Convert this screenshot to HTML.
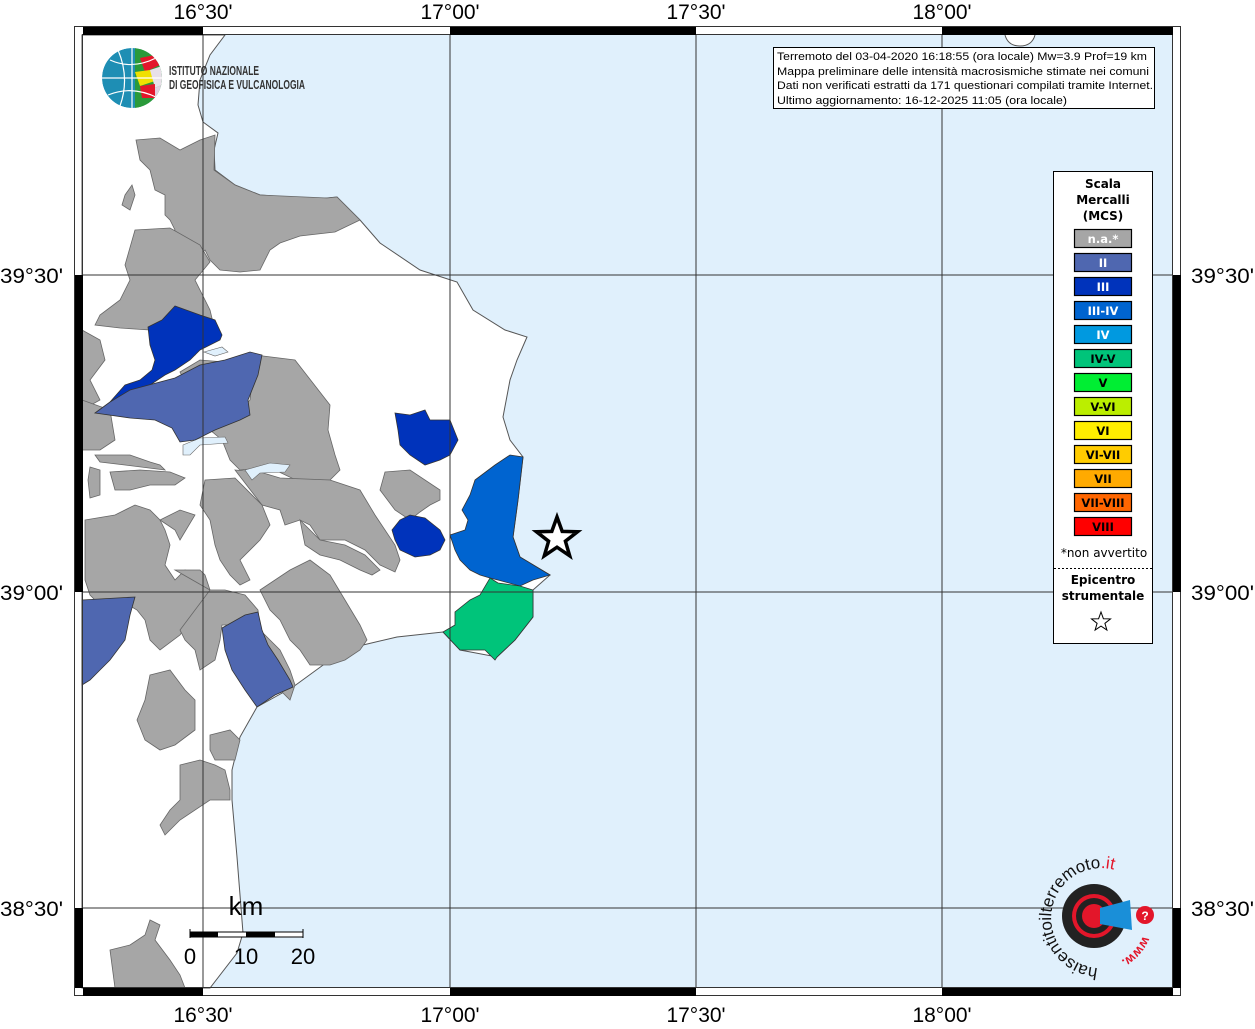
<!DOCTYPE html>
<html><head><meta charset="utf-8">
<style>
html,body{margin:0;padding:0;background:#fff;}
body{width:1255px;height:1024px;overflow:hidden;font-family:"Liberation Sans",sans-serif;}
</style></head><body>
<svg width="1255" height="1024" viewBox="0 0 1255 1024" xmlns="http://www.w3.org/2000/svg" font-family="Liberation Sans, sans-serif">
<rect x="82" y="35" width="1091" height="953" fill="#e0f0fc"/>
<path d="M82,35 L225,35 L210,55 L200,80 L198,105 L203,122 L218,133 L214,150 L215,170 L235,185 L260,195 L300,198 L327,198 L337,197 L360,220 L380,243 L420,270 L457,282 L473,310 L505,330 L527,337 L517,360 L510,380 L503,417 L510,440 L523,457 L518,500 L513,537 L520,557 L550,575 L533,590 L533,617 L515,640 L497,657 L460,650 L443,632 L397,637 L363,645 L330,660 L293,687 L257,707 L240,737 L232,770 L232,800 L237,857 L243,933 L237,953 L210,988 L82,988 Z" fill="#fff" stroke="#555" stroke-width="1"/>
<path d="M1005,35 Q1008,46 1020,46 Q1032,46 1035,35" fill="#fff" stroke="#555"/>
<g fill="#a6a6a6" stroke="#666" stroke-width="0.8">
<path d="M136,140 L160,138 L180,150 L200,140 L215,135 L214,170 L235,185 L260,195 L327,198 L337,197 L360,220 L335,232 L300,236 L280,243 L270,250 L260,270 L240,272 L220,270 L210,260 L205,250 L200,255 L195,270 L170,275 L165,270 L162,260 L160,240 L175,230 L170,220 L165,215 L165,195 L155,190 L150,170 L140,160 Z"/>
<path d="M125,195 L132,185 L135,195 L130,210 L122,205 Z"/>
<path d="M135,230 L170,228 L200,245 L210,262 L195,280 L210,310 L216,335 L200,345 L195,355 L160,345 L150,330 L120,328 L95,325 L100,315 L120,300 L130,280 L125,265 Z"/>
<path d="M82,330 L100,340 L105,360 L90,380 L100,400 L82,410 Z"/>
<path d="M82,400 L110,410 L115,440 L100,450 L82,450 Z"/>
<path d="M255,355 L295,360 L330,405 L328,430 L335,455 L340,470 L330,480 L300,482 L275,470 L260,468 L240,470 L230,460 L222,440 L210,430 L230,420 L250,400 Z"/>
<path d="M180,372 L200,360 L260,365 L245,390 L230,400 L200,410 Z"/>
<path d="M235,470 L260,472 L280,478 L330,480 L360,490 L375,515 L395,545 L400,560 L395,572 L380,565 L365,550 L345,540 L320,540 L310,525 L300,520 L285,525 L280,510 L262,505 Z"/>
<path d="M205,480 L235,478 L262,505 L270,525 L260,540 L240,560 L250,580 L240,585 L230,575 L220,560 L215,545 L210,520 L200,505 Z"/>
<path d="M385,472 L410,470 L440,490 L440,500 L430,505 L420,512 L410,520 L395,510 L380,490 Z"/>
<path d="M95,455 L130,455 L150,462 L160,465 L165,470 L125,465 L100,462 Z"/>
<path d="M110,472 L140,470 L170,472 L185,478 L175,485 L150,485 L130,490 L115,490 Z"/>
<path d="M90,467 L100,470 L100,495 L90,498 L88,480 Z"/>
<path d="M85,520 L115,515 L135,505 L150,510 L160,520 L165,530 L170,545 L165,565 L175,580 L185,570 L200,575 L210,590 L225,600 L205,610 L190,620 L180,635 L160,650 L150,640 L145,620 L137,610 L120,600 L100,605 L90,595 L85,580 Z"/>
<path d="M160,520 L180,510 L195,515 L180,540 L175,530 Z"/>
<path d="M175,570 L200,570 L205,575 L210,590 Z"/>
<path d="M210,590 L225,590 L245,595 L258,610 L260,630 L270,640 L280,650 L290,670 L295,685 L290,700 L280,690 L265,680 L260,670 L250,650 L240,635 L232,625 L222,625 L220,640 L215,660 L200,670 L195,650 L185,640 L180,630 Z"/>
<path d="M260,590 L290,570 L310,560 L330,575 L345,600 L360,625 L367,640 L360,650 L345,660 L330,665 L310,665 L300,650 L290,640 L280,620 L270,610 Z"/>
<path d="M300,520 L320,540 L345,545 L365,555 L380,570 L372,575 L360,570 L340,560 L320,555 L305,545 Z"/>
<path d="M150,675 L170,670 L185,690 L195,700 L195,730 L175,745 L160,750 L145,740 L137,720 L145,700 Z"/>
<path d="M210,735 L230,730 L240,740 L235,760 L215,760 L210,750 Z"/>
<path d="M180,765 L200,760 L215,765 L225,770 L230,790 L230,800 L210,800 L180,820 L165,835 L160,825 L170,810 L180,800 Z"/>
<path d="M110,950 L130,945 L145,935 L150,920 L160,925 L155,940 L170,960 L180,975 L185,988 L115,988 Z"/>
</g>
<g fill="#e0f0fc" stroke="#666" stroke-width="0.6">
<path d="M204,352 L222,347 L228,352 L215,356 Z"/>
<path d="M183,445 L200,438 L225,437 L228,443 L200,445 L190,455 L183,455 Z"/>
<path d="M245,470 L270,463 L290,465 L285,472 L260,473 L252,480 Z"/>
</g>
<g stroke="#333" stroke-width="0.8">
<path d="M148,327 L162,320 L175,306 L200,315 L215,320 L222,335 L220,340 L200,350 L190,360 L175,370 L165,375 L150,385 L135,390 L120,398 L110,402 L125,385 L140,380 L152,370 L155,360 L150,345 Z" fill="#0033bb"/>
<path d="M95,413 L110,402 L130,390 L175,378 L200,365 L225,360 L250,352 L262,355 L258,375 L248,400 L250,415 L240,420 L215,430 L195,440 L180,442 L172,428 L155,420 L130,418 Z" fill="#4f67b0"/>
<path d="M82,600 L135,597 L130,615 L125,640 L110,660 L100,670 L90,680 L82,685 Z" fill="#4f67b0"/>
<path d="M222,628 L245,615 L258,612 L262,630 L268,645 L278,660 L290,680 L293,687 L275,695 L257,707 L245,690 L232,670 L225,650 Z" fill="#4f67b0"/>
<path d="M395,413 L410,415 L425,410 L430,420 L450,420 L458,440 L450,455 L440,460 L425,465 L410,455 L400,445 L398,430 Z" fill="#0033bb"/>
<path d="M400,520 L410,515 L425,518 L440,530 L445,540 L440,550 L430,555 L415,557 L400,550 L395,540 L392,530 Z" fill="#0033bb"/>
<path d="M475,480 L495,465 L510,455 L523,457 L518,500 L513,537 L520,557 L550,575 L533,580 L520,586 L498,580 L490,578 L480,575 L470,570 L460,560 L455,550 L450,535 L465,530 L468,520 L462,510 L470,495 Z" fill="#0064d0"/>
<path d="M490,578 L498,583 L520,586 L533,590 L533,617 L515,640 L497,657 L495,660 L485,650 L460,650 L443,632 L455,625 L455,612 L470,600 L480,595 Z" fill="#00c47a"/>
</g>
<g stroke="#333" stroke-width="1">
<line x1="203" y1="35" x2="203" y2="988"/>
<line x1="450" y1="35" x2="450" y2="988"/>
<line x1="696" y1="35" x2="696" y2="988"/>
<line x1="942" y1="35" x2="942" y2="988"/>
<line x1="82" y1="275" x2="1173" y2="275"/>
<line x1="82" y1="592" x2="1173" y2="592"/>
<line x1="82" y1="908" x2="1173" y2="908"/>
</g>
<rect x="74.5" y="26.5" width="1106" height="969" fill="none" stroke="#333"/>
<rect x="82.5" y="34.5" width="1090" height="953" fill="none" stroke="#333"/>
<g fill="#000">
<rect x="83" y="27" width="120" height="8"/><rect x="450" y="27" width="246" height="8"/><rect x="942" y="27" width="231" height="8"/>
<rect x="83" y="988" width="120" height="8"/><rect x="450" y="988" width="246" height="8"/><rect x="942" y="988" width="231" height="8"/>
<rect x="75" y="275" width="8" height="317"/><rect x="75" y="908" width="8" height="80"/>
<rect x="1173" y="275" width="8" height="317"/><rect x="1173" y="908" width="8" height="80"/>
</g>
<g font-size="21" fill="#000" text-anchor="middle">
<text x="203" y="19">16°30'</text><text x="450" y="19">17°00'</text><text x="696" y="19">17°30'</text><text x="942" y="19">18°00'</text>
<text x="203" y="1022">16°30'</text><text x="450" y="1022">17°00'</text><text x="696" y="1022">17°30'</text><text x="942" y="1022">18°00'</text>
</g>
<g font-size="21" fill="#000">
<text x="0" y="283" textLength="63" lengthAdjust="spacingAndGlyphs">39°30'</text><text x="0" y="600" textLength="63" lengthAdjust="spacingAndGlyphs">39°00'</text><text x="0" y="916" textLength="63" lengthAdjust="spacingAndGlyphs">38°30'</text>
<text x="1191" y="283" textLength="63" lengthAdjust="spacingAndGlyphs">39°30'</text><text x="1191" y="600" textLength="63" lengthAdjust="spacingAndGlyphs">39°00'</text><text x="1191" y="916" textLength="63" lengthAdjust="spacingAndGlyphs">38°30'</text>
</g>
<defs><clipPath id="gl"><circle cx="132" cy="78" r="30"/></clipPath></defs>
<g clip-path="url(#gl)">
<circle cx="132" cy="78" r="30" fill="#1e8eb4"/>
<path d="M135,48 L165,48 L165,108 L135,108 Z" fill="#2a9a3a"/>
<path d="M140,58 L155,55 L160,65 L145,72 Z" fill="#e3162a"/>
<path d="M135,72 L150,70 L158,80 L140,86 Z" fill="#f0e000"/>
<path d="M150,70 L162,66 L164,84 L155,88 Z" fill="#e8e0e8"/>
<path d="M140,86 L155,84 L155,98 L142,98 Z" fill="#e3162a"/>
<path d="M155,88 L164,84 L162,100 L155,100 Z" fill="#e0d0e0"/>
<path d="M102,78 H162 M132,48 V108 M110,60 Q132,70 156,58 M108,95 Q132,85 158,98 M118,50 Q130,78 120,106" stroke="#fff" stroke-width="1.2" fill="none"/>
</g>
<g font-size="13" fill="#333" font-weight="bold">
<text x="169" y="75" textLength="90" lengthAdjust="spacingAndGlyphs">ISTITUTO NAZIONALE</text>
<text x="169" y="89" textLength="136" lengthAdjust="spacingAndGlyphs">DI GEOFISICA E VULCANOLOGIA</text>
</g>
<rect x="773.5" y="47.5" width="381" height="61" fill="#fff" stroke="#000"/>
<g font-size="11" fill="#000">
<text x="777" y="60" textLength="370" lengthAdjust="spacingAndGlyphs">Terremoto del 03-04-2020 16:18:55 (ora locale) Mw=3.9 Prof=19 km</text>
<text x="777" y="75" textLength="372" lengthAdjust="spacingAndGlyphs">Mappa preliminare delle intensità macrosismiche stimate nei comuni</text>
<text x="777" y="89" textLength="376" lengthAdjust="spacingAndGlyphs">Dati non verificati estratti da 171 questionari compilati tramite Internet.</text>
<text x="777" y="104" textLength="290" lengthAdjust="spacingAndGlyphs">Ultimo aggiornamento: 16-12-2025 11:05 (ora locale)</text>
</g>
<rect x="1053.5" y="171.5" width="99" height="472" fill="#fff" stroke="#000"/>
<g font-size="12" font-weight="bold" text-anchor="middle" fill="#000" font-family="DejaVu Sans, sans-serif">
<text x="1103" y="188">Scala</text><text x="1103" y="204">Mercalli</text><text x="1103" y="220">(MCS)</text>
</g>
<g stroke="#000" stroke-width="1.2">
<rect x="1074.5" y="229.5" width="57" height="18" fill="#a6a6a6"/>
<rect x="1074.5" y="253.5" width="57" height="18" fill="#4f67b0"/>
<rect x="1074.5" y="277.5" width="57" height="18" fill="#0033bb"/>
<rect x="1074.5" y="301.5" width="57" height="18" fill="#0064d0"/>
<rect x="1074.5" y="325.5" width="57" height="18" fill="#0099e0"/>
<rect x="1074.5" y="349.5" width="57" height="18" fill="#00c47a"/>
<rect x="1074.5" y="373.5" width="57" height="18" fill="#00ee33"/>
<rect x="1074.5" y="397.5" width="57" height="18" fill="#bbee00"/>
<rect x="1074.5" y="421.5" width="57" height="18" fill="#ffee00"/>
<rect x="1074.5" y="445.5" width="57" height="18" fill="#ffcc00"/>
<rect x="1074.5" y="469.5" width="57" height="18" fill="#ffaa00"/>
<rect x="1074.5" y="493.5" width="57" height="18" fill="#ff6600"/>
<rect x="1074.5" y="517.5" width="57" height="18" fill="#ff0000"/>
</g>
<g font-size="11.5" font-weight="bold" text-anchor="middle" font-family="DejaVu Sans, sans-serif">
<text x="1103" y="243" fill="#fff">n.a.*</text>
<text x="1103" y="267" fill="#fff">II</text>
<text x="1103" y="291" fill="#fff">III</text>
<text x="1103" y="315" fill="#fff">III-IV</text>
<text x="1103" y="339" fill="#fff">IV</text>
<text x="1103" y="363" fill="#000">IV-V</text>
<text x="1103" y="387" fill="#000">V</text>
<text x="1103" y="411" fill="#000">V-VI</text>
<text x="1103" y="435" fill="#000">VI</text>
<text x="1103" y="459" fill="#000">VI-VII</text>
<text x="1103" y="483" fill="#000">VII</text>
<text x="1103" y="507" fill="#000">VII-VIII</text>
<text x="1103" y="531" fill="#000">VIII</text>
</g>
<text x="1104" y="557" font-size="12" text-anchor="middle" font-family="DejaVu Sans, sans-serif">*non avvertito</text>
<line x1="1054" y1="568.5" x2="1152" y2="568.5" stroke="#000" stroke-dasharray="2,2"/>
<g font-size="12" font-weight="bold" text-anchor="middle" font-family="DejaVu Sans, sans-serif">
<text x="1103" y="584">Epicentro</text><text x="1103" y="600">strumentale</text>
</g>
<path d="M1101,612 L1103.4,618.7 L1110.5,618.9 L1104.9,623.3 L1106.9,630.1 L1101,626.1 L1095.1,630.1 L1097.1,623.3 L1091.5,618.9 L1098.6,618.7 Z" fill="#fff" stroke="#000" stroke-width="1"/>
<path d="M557,517 L562.2,531.4 L577.5,531.8 L565.4,541.2 L569.7,555.8 L557,547.2 L544.3,555.8 L548.6,541.2 L536.5,531.8 L551.8,531.4 Z" fill="#fff" stroke="#000" stroke-width="3.5"/>
<text x="246" y="915" font-size="26" text-anchor="middle">km</text>
<rect x="190" y="932" width="113" height="5" fill="#fff" stroke="#000"/>
<rect x="190" y="932" width="28" height="5" fill="#000"/>
<rect x="246" y="932" width="29" height="5" fill="#000"/>
<line x1="190" y1="929" x2="190" y2="938" stroke="#000"/><line x1="303" y1="929" x2="303" y2="938" stroke="#000"/>
<g font-size="22" text-anchor="middle"><text x="190" y="964">0</text><text x="246" y="964">10</text><text x="303" y="964">20</text></g>
<circle cx="1094" cy="916" r="32" fill="#222"/>
<circle cx="1094" cy="916" r="22" fill="#e3162a"/>
<circle cx="1094" cy="916" r="18" fill="#222"/>
<circle cx="1094" cy="916" r="12" fill="#e3162a"/>
<path d="M1100,908 L1130,900 L1132,930 L1100,924 Z" fill="#1a8fd8"/>
<circle cx="1145" cy="915" r="9" fill="#e3162a"/>
<text x="1145" y="920" font-size="12" fill="#fff" text-anchor="middle" font-weight="bold">?</text>
<defs><path id="arc" d="M1098,968 A50,50 0 1,1 1146,896"/>
<path id="arc2" d="M1143,936 A48,48 0 0,1 1100,966"/></defs>
<text font-size="17" fill="#111"><textPath href="#arc">haisentitoilterremoto<tspan fill="#e3162a">.it</tspan></textPath></text>
<text font-size="13" fill="#e3162a" font-weight="bold"><textPath href="#arc2">www.</textPath></text>
</svg>
</body></html>
